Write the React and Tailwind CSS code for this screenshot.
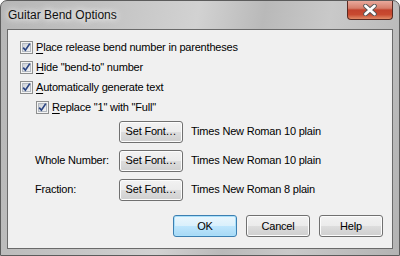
import React from "react";

const font = { fontFamily: '"Liberation Sans", Arial, sans-serif' };

function Check({ className = "" }) {
  return (
    <svg width="13" height="13" viewBox="0 0 13 13" className={className}>
      <rect x="0.5" y="0.5" width="12" height="12" fill="#f4f4f4" stroke="#8e8f8f" />
      <defs>
        <linearGradient id="cbg" x1="0" y1="0" x2="1" y2="1">
          <stop offset="0" stopColor="#cbcfd5" />
          <stop offset="1" stopColor="#f6f6f6" />
        </linearGradient>
      </defs>
      <rect x="2.5" y="2.5" width="8" height="8" fill="url(#cbg)" stroke="#b3b9c1" />
      <path d="M3.2 6.6 L5.4 9.2 L9.8 2.6" fill="none" stroke="#2b4583" strokeWidth="1.7" />
    </svg>
  );
}

function U({ children }) {
  return <span className="underline underline-offset-[2px] decoration-1">{children}</span>;
}

function CheckRow({ indent, children }) {
  return (
    <div className={`flex h-[20px] items-center ${indent ? "pl-[28px]" : "pl-[12px]"}`}>
      <Check />
      <span className="ml-[3px]">{children}</span>
    </div>
  );
}

function Btn({ children, w = "w-[64px]", primary }) {
  return (
    <div
      className={`${w} h-[22px] flex items-center justify-center rounded-[3px] border ${
        primary
          ? "border-[#3c7fb1] bg-[linear-gradient(#eaf6fd_0%,#d9f0fc_50%,#bee6fd_50%,#a7d9f5_100%)] shadow-[inset_0_0_0_1px_#a9e0fb]"
          : "border-[#707070] bg-[linear-gradient(#f2f2f2_0%,#ebebeb_50%,#dddddd_50%,#cfcfcf_100%)] shadow-[inset_0_0_0_1px_#fcfcfc]"
      }`}
    >
      {children}
    </div>
  );
}

export default function App() {
  return (
    <div
      className="relative w-[400px] h-[256px] rounded-t-[7px] border border-[#5c5c5c] bg-[linear-gradient(100deg,#b6b6b6_0%,#c4c4c4_25%,#d2d2d2_45%,#b9b9b9_60%,#c9c9c9_75%,#b3b3b3_100%)] text-black"
      style={font}
    >
      <div className="h-[28px] flex items-center pl-[7px] pb-[1px]">
        <span className="text-[12px] text-[#111] [text-shadow:0_0_6px_#ffffff,0_0_10px_#ffffff]">Guitar Bend Options</span>
      </div>
      <div className="absolute right-[6px] top-0 w-[46px] h-[19px] rounded-b-[4px] border border-t-0 border-[#5a2a22] bg-[linear-gradient(#e9a99c_0%,#d67e6b_40%,#c2432d_50%,#c84a30_75%,#e08a66_100%)] flex items-center justify-center">
        <svg width="16" height="12" viewBox="0 0 16 12">
          <path d="M3.5 2 L12.5 10 M12.5 2 L3.5 10" stroke="#555" strokeWidth="4.6" strokeLinecap="round" />
          <path d="M3.5 2 L12.5 10 M12.5 2 L3.5 10" stroke="#fff" strokeWidth="2.8" strokeLinecap="round" />
        </svg>
      </div>
      <div className="ml-[6px] w-[386px] h-[220px] border border-[#6a6a6a] bg-[#f0f0f0] flex flex-col text-[11px] tracking-[-0.2px]">
        <div className="h-[7px]" />
        <CheckRow>
          <U>P</U>lace release bend number in parentheses
        </CheckRow>
        <CheckRow>
          <U>H</U>ide "bend-to" number
        </CheckRow>
        <CheckRow>
          <U>A</U>utomatically generate text
        </CheckRow>
        <CheckRow indent>
          <U>R</U>eplace "1" with "Full"
        </CheckRow>
        {[
          ["", "Times New Roman 10 plain"],
          ["Whole Number:", "Times New Roman 10 plain"],
          ["Fraction:", "Times New Roman 8 plain"],
        ].map(([label, desc], i) => (
          <div key={i} className="h-[29px] flex items-center">
            <span className="w-[111px] pl-[27px]">{label}</span>
            <Btn>Set Font…</Btn>
            <span className="ml-[8px]">{desc}</span>
          </div>
        ))}
        <div className="mt-[11px] flex gap-[9px] pl-[165px]">
          <Btn primary>OK</Btn>
          <Btn>Cancel</Btn>
          <Btn>Help</Btn>
        </div>
      </div>
    </div>
  );
}
